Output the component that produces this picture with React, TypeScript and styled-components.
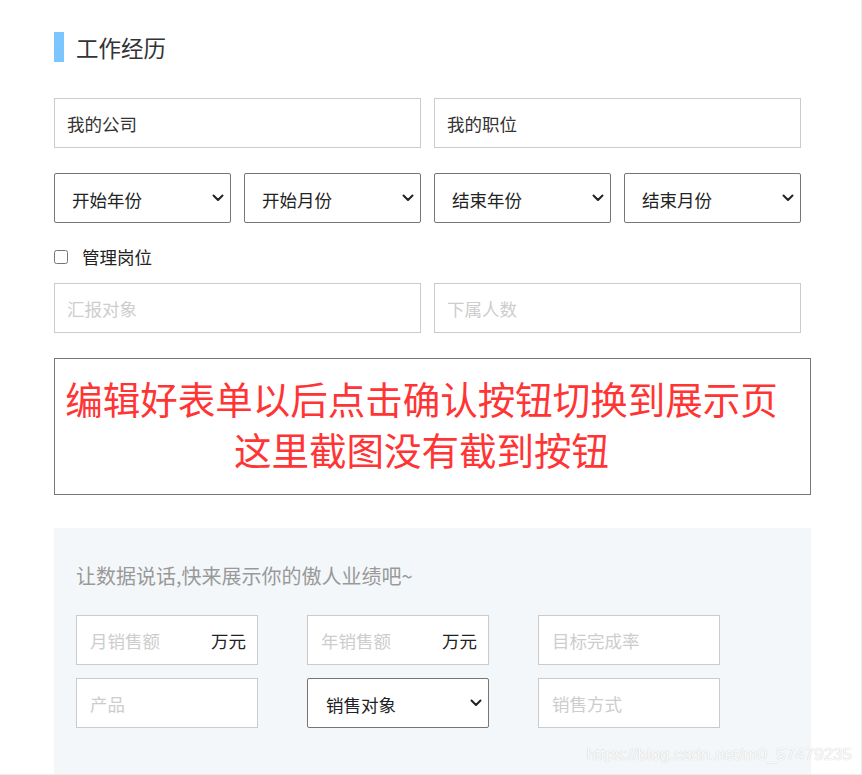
import { useEffect, useRef } from 'react';
import styled, { createGlobalStyle } from 'styled-components';

const GlobalStyle = createGlobalStyle`
  html, body {
    margin: 0;
    padding: 0;
    background: #fff;
  }
  body {
    font-family: 'Noto Sans CJK SC', 'Microsoft YaHei', sans-serif;
    color: #333;
    overflow: hidden;
  }
  * {
    box-sizing: border-box;
  }
`;

const Chevron = () => (
  <svg width="12" height="8" viewBox="0 0 12 8" fill="none">
    <path d="M1.5 1.5 L6 6 L10.5 1.5" stroke="#222" strokeWidth="2" strokeLinecap="round" strokeLinejoin="round" />
  </svg>
);

type SelectProps = { label: string; padLeft?: number };

function SelectBox({ label, padLeft = 17 }: SelectProps) {
  return (
    <SelectWrap>
      <NativeSelect $padLeft={padLeft} defaultValue="">
        <option value="">{label}</option>
      </NativeSelect>
      <ArrowIcon>
        <Chevron />
      </ArrowIcon>
    </SelectWrap>
  );
}

export default function App() {
  const posRef = useRef<HTMLInputElement>(null);

  useEffect(() => {
    const el = posRef.current;
    if (el) {
      el.focus();
      el.setSelectionRange(el.value.length, el.value.length);
    }
  }, []);

  return (
    <Page>
      <GlobalStyle />
      <Section>
        <Title>
          <TitleBar />
          <TitleText>工作经历</TitleText>
        </Title>

        <TwoCols>
          <TextInput defaultValue="我的公司" />
          <TextInput ref={posRef} defaultValue="我的职位" />
        </TwoCols>

        <FourCols>
          <SelectBox label="开始年份" />
          <SelectBox label="开始月份" />
          <SelectBox label="结束年份" />
          <SelectBox label="结束月份" />
        </FourCols>

        <CheckRow>
          <Check type="checkbox" />
          <CheckLabel>管理岗位</CheckLabel>
        </CheckRow>

        <TwoCols $top={14}>
          <TextInput placeholder="汇报对象" />
          <TextInput placeholder="下属人数" />
        </TwoCols>

        <NoteBox>
          <NoteLine>编辑好表单以后点击确认按钮切换到展示页</NoteLine>
          <NoteLine>这里截图没有截到按钮</NoteLine>
        </NoteBox>

        <SalesPanel>
          <SalesHint>让数据说话,快来展示你的傲人业绩吧~</SalesHint>
          <SalesGrid>
            <UnitField>
              <UnitInput placeholder="月销售额" />
              <Unit>万元</Unit>
            </UnitField>
            <UnitField>
              <UnitInput placeholder="年销售额" />
              <Unit>万元</Unit>
            </UnitField>
            <SmallInput placeholder="目标完成率" />
            <SmallInput placeholder="产品" />
            <SelectBox label="销售对象" padLeft={18} />
            <SmallInput placeholder="销售方式" />
          </SalesGrid>
        </SalesPanel>
      </Section>
      <Watermark>https://blog.csdn.net/m0_57479235</Watermark>
    </Page>
  );
}

const Page = styled.div`
  position: relative;
  width: 862px;
  height: 775px;
  padding: 32px 0 0 54px;
  overflow: hidden;
  border-right: 1px solid #ececec;
  border-bottom: 1px solid #ececec;
`;

const Section = styled.div`
  width: 757px;
  display: flex;
  flex-direction: column;
`;

const Title = styled.div`
  display: flex;
  align-items: center;
  gap: 12px;
  height: 30px;
`;

const TitleBar = styled.span`
  width: 10px;
  height: 30px;
  background: #7cc6ff;
`;

const TitleText = styled.h2`
  margin: 0;
  font-size: 22.5px;
  font-weight: 400;
  line-height: 30px;
  color: #333;
`;

const TwoCols = styled.div<{ $top?: number }>`
  display: grid;
  grid-template-columns: 367px 367px;
  column-gap: 13px;
  margin-top: ${(p) => p.$top ?? 36}px;
`;

const FourCols = styled.div`
  display: grid;
  grid-template-columns: repeat(4, 177px);
  column-gap: 13px;
  margin-top: 25px;
`;

const TextInput = styled.input`
  height: 50px;
  border: 1px solid #cbcbcb;
  border-radius: 0;
  padding: 0 12px;
  font-family: inherit;
  font-size: 17.5px;
  color: #333;
  background: #fff;
  outline: none;
  caret-color: #222;

  &::placeholder {
    color: #cdcdcd;
  }
`;

const SelectWrap = styled.div`
  position: relative;
  height: 50px;
`;

const NativeSelect = styled.select<{ $padLeft: number }>`
  appearance: none;
  width: 100%;
  height: 50px;
  border: 1px solid #767676;
  border-radius: 2px;
  padding: 2px 30px 0 ${(p) => p.$padLeft}px;
  font-family: inherit;
  font-size: 17.5px;
  color: #222;
  background: #fff;
  outline: none;
`;

const ArrowIcon = styled.span`
  position: absolute;
  right: 7px;
  top: 50%;
  transform: translateY(-50%);
  display: flex;
  pointer-events: none;
`;

const CheckRow = styled.div`
  display: flex;
  align-items: center;
  gap: 14px;
  height: 24px;
  margin-top: 22px;
`;

const Check = styled.input`
  width: 14px;
  height: 14px;
  margin: 0;
`;

const CheckLabel = styled.span`
  font-size: 17.5px;
  line-height: 24px;
  color: #222;
`;

const NoteBox = styled.div`
  margin-top: 25px;
  height: 137px;
  border: 1px solid #777;
  padding: 13px 22px 0 0;
  display: flex;
  flex-direction: column;
  align-items: center;
`;

const NoteLine = styled.div`
  font-size: 37.5px;
  line-height: 51px;
  color: #ff3535;
  white-space: nowrap;
`;

const SalesPanel = styled.div`
  margin-top: 33px;
  height: 260px;
  background: #f4f7fa;
  padding: 34px 22px 0;
`;

const SalesHint = styled.div`
  font-size: 20px;
  line-height: 28px;
  color: #999;
`;

const SalesGrid = styled.div`
  display: grid;
  grid-template-columns: repeat(3, 182px);
  grid-auto-rows: 50px;
  column-gap: 49px;
  row-gap: 13px;
  margin-top: 25px;
`;

const UnitField = styled.div`
  display: flex;
  align-items: center;
  height: 50px;
  border: 1px solid #cbcbcb;
  background: #fff;
  padding: 0 11px 0 13px;
`;

const UnitInput = styled.input`
  flex: 1;
  min-width: 0;
  border: none;
  padding: 0;
  font-family: inherit;
  font-size: 17.5px;
  color: #333;
  background: transparent;
  outline: none;

  &::placeholder {
    color: #cdcdcd;
  }
`;

const Unit = styled.span`
  font-size: 17.5px;
  color: #222;
`;

const SmallInput = styled(TextInput)`
  width: 182px;
  padding: 0 13px;
`;

const Watermark = styled.div`
  position: absolute;
  right: 9px;
  bottom: 9px;
  font-family: 'Liberation Sans', Arial, sans-serif;
  font-size: 17px;
  color: rgba(255, 255, 255, 0.9);
  text-shadow: 0 0 1px #d0d0d0, 0 0 1px #dadada;
`;
